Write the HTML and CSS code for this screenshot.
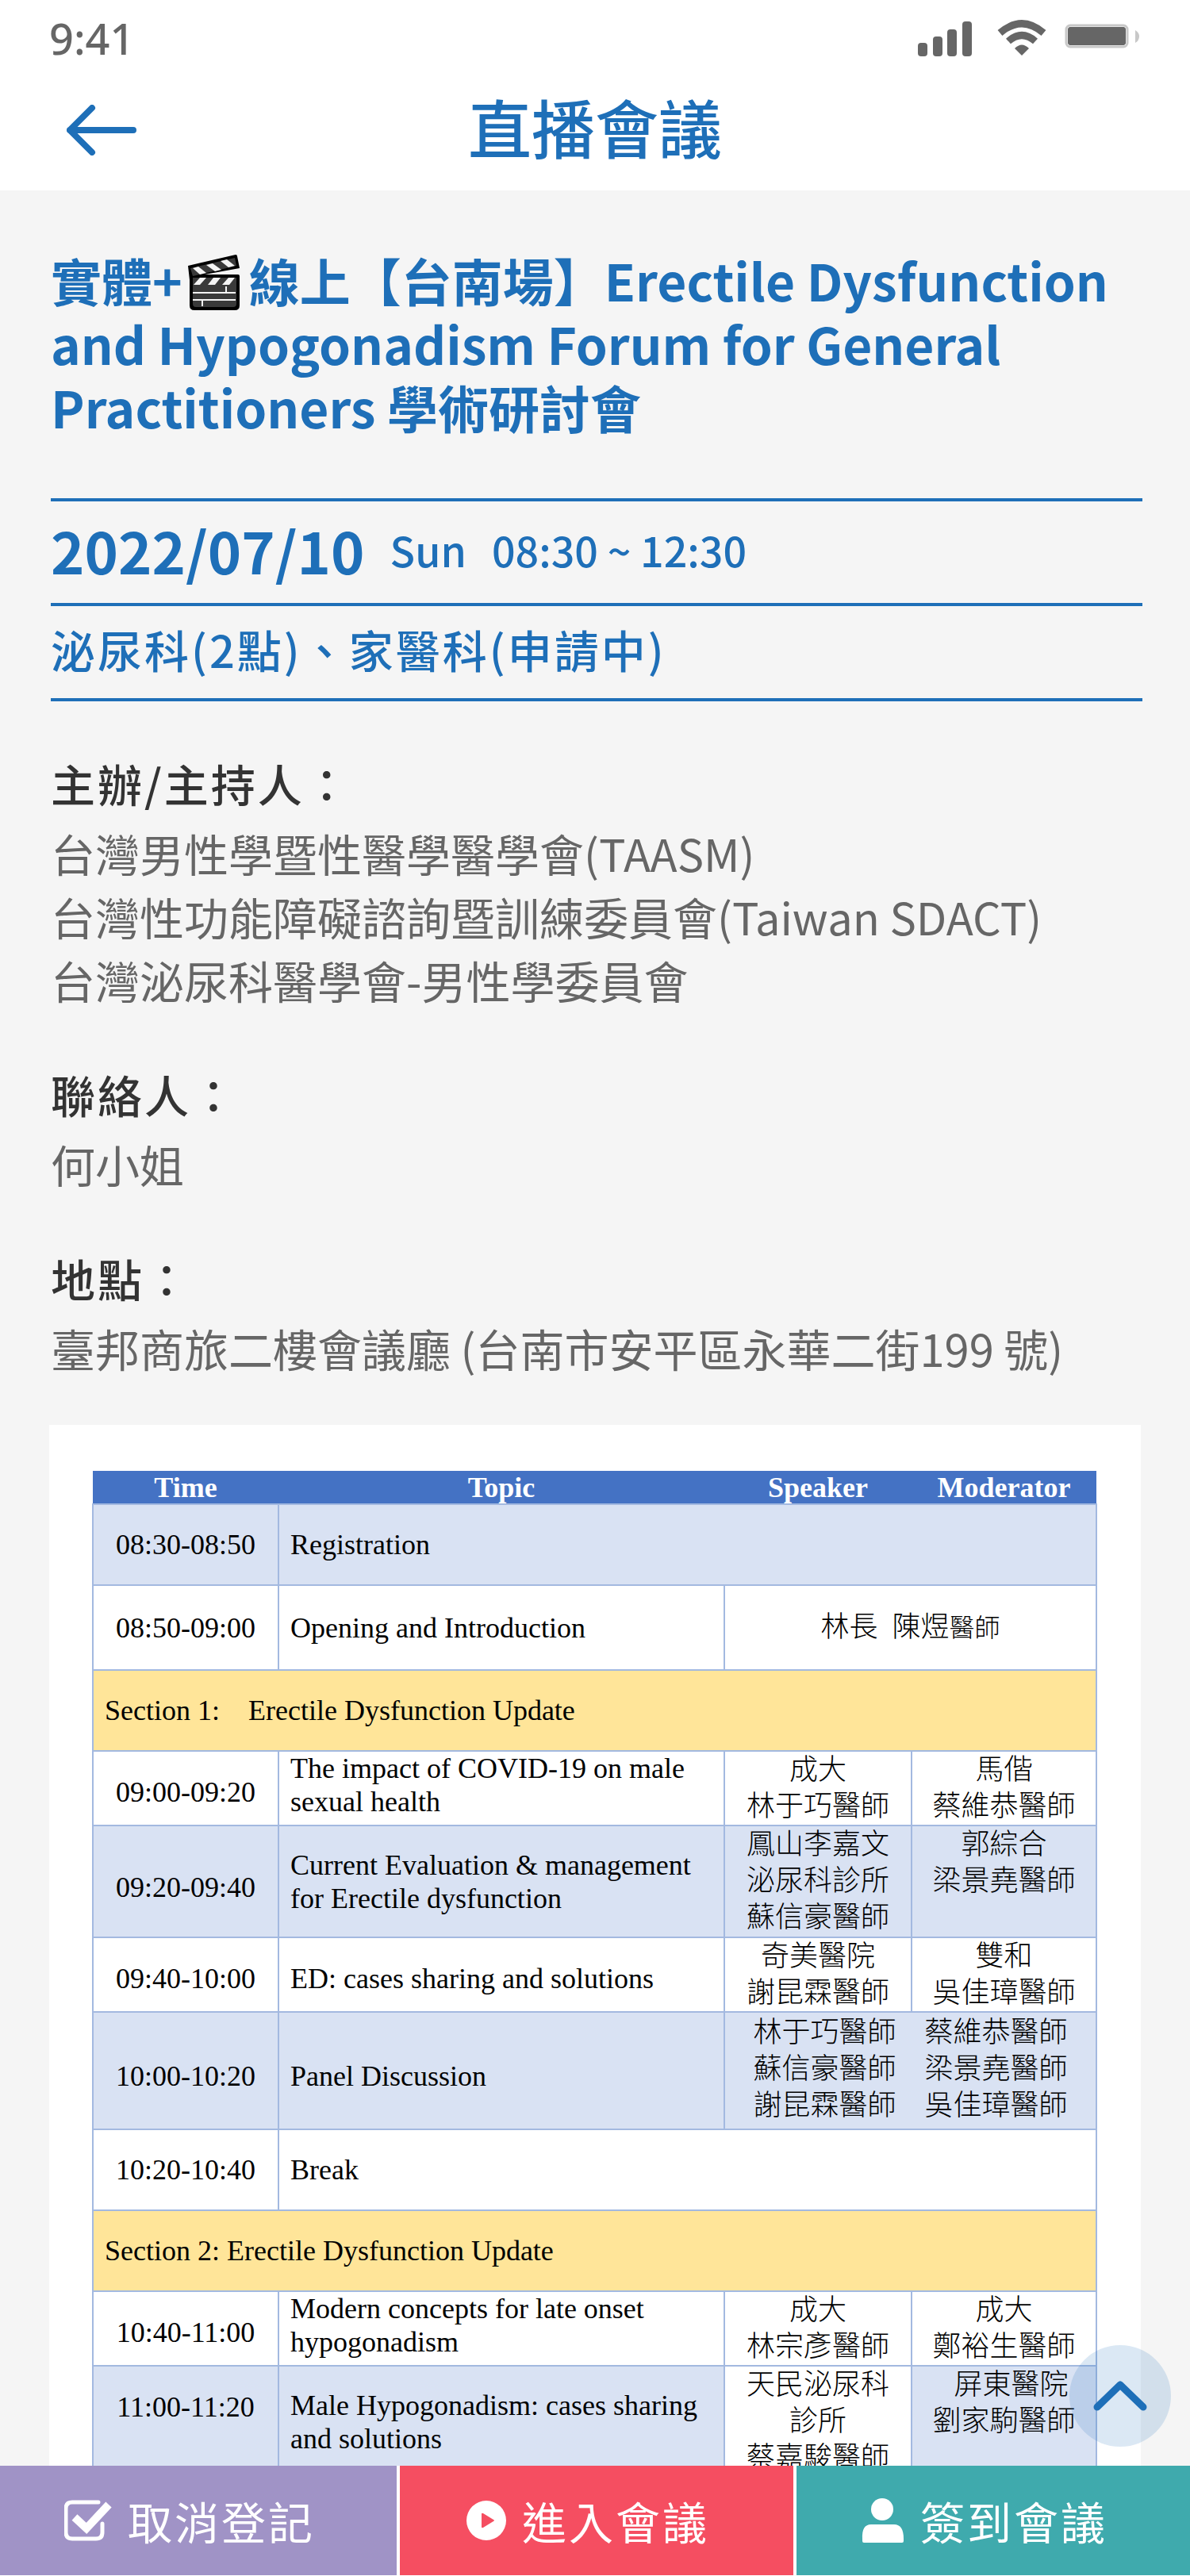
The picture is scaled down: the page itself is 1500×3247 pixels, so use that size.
FILE: index.html
```html
<!DOCTYPE html>
<html lang="zh-Hant-TW">
<head>
<meta charset="utf-8">
<meta name="viewport" content="width=device-width, initial-scale=1">
<title>直播會議</title>
<link rel="stylesheet" href="styles.css">
</head>
<body>
<div class="app">
  <header class="top">
    <div class="status">
      <span class="clock">9:41</span>
      <svg class="status-icons" width="280" height="48" viewBox="0 0 280 48" aria-hidden="true">
        <g fill="#666">
          <rect x="1" y="30" width="12" height="17" rx="4"/>
          <rect x="20" y="22" width="12" height="25" rx="4"/>
          <rect x="38" y="13" width="12" height="34" rx="4"/>
          <rect x="57" y="3" width="12" height="44" rx="4"/>
          <path d="M132 46 L123 37 Q132 28 141 37 Z"/>
          <rect x="190" y="10" width="73" height="23" rx="4"/>
        </g>
        <g fill="none" stroke="#666" stroke-width="9">
          <path d="M104.500 17.500 Q132 -6 159.500 17.500"/>
          <path d="M115 28 Q132 13 149 28"/>
        </g>
        <rect x="188" y="8" width="77" height="27" rx="5" fill="none" stroke="#c8c8c8" stroke-width="3"/>
        <rect x="190" y="10" width="73" height="23" rx="4" fill="#666"/>
        <path d="M275 14 Q280 17 280 22 Q280 27 275 30 Z" fill="#c8c8c8"/>
      </svg>
    </div>
    <div class="navbar">
      <button class="back" type="button" aria-label="返回">
        <svg width="88" height="64" viewBox="0 0 88 64" fill="none" stroke="#1e6fb8" stroke-width="8" stroke-linecap="round" stroke-linejoin="round"><path d="M84 32H4M32 4L4 32L32 60"/></svg>
      </button>
      <h1>直播會議</h1>
    </div>
  </header>

  <main class="content">
    <section class="details">
      <h2 class="title">實體+<svg class="clapper" width="84" height="72" viewBox="0 0 84 72" role="img" aria-label="場記板">
        <path d="M7 15 L67 1 Q69 1 69 3 L72 18 L28 26 H70 Q72 26 72 28 V65 Q72 71 66 71 H15 Q9 71 9 65 V33 Z" fill="#000"/>
        <path d="M10 18 L66 5 L68 15 L13 28 Z M13 30 H68 V63 Q68 67 64 67 H17 Q13 67 13 63 Z" fill="#3a3a3a"/>
        <path d="M13 18 L20 16 L30 24 L22 26 Z M30 14 L38 12 L49 20 L41 22 Z M48 9 L56 7 L66 15 L58 17 Z M14 39 L22 30 H30 L22 39 Z M32 39 L39 30 H48 L41 39 Z M50 39 L58 30 H66 L59 39 Z" fill="#f4f4f4"/>
        <path d="M13 49 H67 M13 58 H67 M55 41 V49 M25 59 V66" fill="none" stroke="#f4f4f4" stroke-width="2"/>
      </svg>線上【台南場】Erectile Dysfunction and Hypogonadism Forum for General Practitioners 學術研討會</h2>
      <div class="when">
        <time class="date" datetime="2022-07-10">2022/07/10</time>
        <span>Sun</span>
        <span>08:30 ~ 12:30</span>
      </div>
      <p class="credits">泌尿科(2點)、家醫科(申請中)</p>
      <dl class="facts">
        <div>
          <dt>主辦/主持人：</dt>
          <dd>台灣男性學暨性醫學醫學會(TAASM)</dd>
          <dd>台灣性功能障礙諮詢暨訓練委員會(Taiwan SDACT)</dd>
          <dd>台灣泌尿科醫學會-男性學委員會</dd>
        </div>
        <div>
          <dt>聯絡人：</dt>
          <dd>何小姐</dd>
        </div>
        <div>
          <dt>地點：</dt>
          <dd>臺邦商旅二樓會議廳 (台南市安平區永華二街199 號)</dd>
        </div>
      </dl>
    </section>

    <section class="agenda">
      <table>
        <colgroup><col class="c-time"><col class="c-topic"><col class="c-speaker"><col class="c-moderator"></colgroup>
        <thead>
          <tr><th>Time</th><th>Topic</th><th>Speaker</th><th>Moderator</th></tr>
        </thead>
        <tbody>
          <tr class="tinted"><td class="time">08:30-08:50</td><td colspan="3">Registration</td></tr>
          <tr class="tall"><td class="time">08:50-09:00</td><td>Opening and Introduction</td><td class="people chair" colspan="2">林長&nbsp; 陳煜<small>醫師</small></td></tr>
          <tr class="section"><td colspan="4">Section 1:&nbsp;&nbsp;&nbsp; Erectile Dysfunction Update</td></tr>
          <tr class="talk two"><td class="time">09:00-09:20</td><td class="wrapped">The impact of COVID-19 on male sexual health</td><td class="people">成大<br>林于巧醫師</td><td class="people">馬偕<br>蔡維恭醫師</td></tr>
          <tr class="talk three tinted"><td class="time">09:20-09:40</td><td>Current Evaluation &amp; management for Erectile dysfunction</td><td class="people">鳳山李嘉文<br>泌尿科診所<br>蘇信豪醫師</td><td class="people">郭綜合<br>梁景堯醫師</td></tr>
          <tr class="talk two"><td class="time">09:40-10:00</td><td class="single">ED: cases sharing and solutions</td><td class="people">奇美醫院<br>謝昆霖醫師</td><td class="people">雙和<br>吳佳璋醫師</td></tr>
          <tr class="talk panel tinted"><td class="time">10:00-10:20</td><td class="single">Panel Discussion</td><td class="people" colspan="2">林于巧醫師　蔡維恭醫師<br>蘇信豪醫師　梁景堯醫師<br>謝昆霖醫師　吳佳璋醫師</td></tr>
          <tr><td class="time">10:20-10:40</td><td colspan="3">Break</td></tr>
          <tr class="section"><td colspan="4">Section 2: Erectile Dysfunction Update</td></tr>
          <tr class="talk two"><td class="time">10:40-11:00</td><td class="wrapped">Modern concepts for late onset hypogonadism</td><td class="people">成大<br>林宗彥醫師</td><td class="people">成大<br>鄭裕生醫師</td></tr>
          <tr class="talk three tinted"><td class="time first-line">11:00-11:20</td><td>Male Hypogonadism: cases sharing and solutions</td><td class="people plain">天民泌尿科<br>診所<br>蔡嘉駿醫師</td><td class="people">&nbsp;&nbsp;屏東醫院<br>劉家駒醫師</td></tr>
        </tbody>
      </table>
    </section>
  </main>

  <footer class="actions">
    <button class="to-top" type="button" aria-label="回到頂端">
      <svg width="68" height="40" viewBox="0 0 68 40" fill="none" stroke="#1e6fb8" stroke-width="9" stroke-linecap="round" stroke-linejoin="round"><path d="M5 34L34 6L63 34"/></svg>
    </button>
    <button class="action cancel" type="button">
      <svg width="60" height="52" viewBox="0 0 60 52" fill="none" stroke="#fff"><path d="M43 3H10Q2 3 2 11V41Q2 49 10 49H40Q48 49 48 41V30" stroke-width="5" stroke-linecap="round"/><path d="M13 22L28 36L56 6" stroke-width="10"/></svg>
      取消登記
    </button>
    <button class="action enter" type="button">
      <svg width="50" height="50" viewBox="0 0 50 50" fill="#fff"><path fill-rule="evenodd" d="M25 0A25 25 0 1 1 25 50A25 25 0 1 1 25 0ZM19 17V33Q19 35 21 34L34 26Q36 25 34 24L21 16Q19 15 19 17Z"/></svg>
      進入會議
    </button>
    <button class="action checkin" type="button">
      <svg width="54" height="58" viewBox="0 0 54 58" fill="#fff"><circle cx="26" cy="15" r="14"/><path d="M12 34H41Q53 34 53 52V55Q53 57 51 57H3Q1 57 1 55V52Q0 34 12 34Z"/></svg>
      簽到會議
    </button>
  </footer>
</div>
</body>
</html>
```
FILE: styles.css
```css
* {
  box-sizing: border-box;
}

body {
  margin: 0;
  background: #f5f5f5;
  color: #666;
  font-family: "Noto Sans CJK TC", sans-serif;
  font-size: 56px;
  line-height: 80px;
}

h1, h2, p, dl, dd {
  margin: 0;
}

button {
  border: 0;
  padding: 0;
  background: none;
  color: inherit;
  font: inherit;
}

svg {
  display: block;
  flex: none;
}

.app {
  display: flex;
  flex-direction: column;
  height: 100vh;
}

/* Header */
.top {
  flex: none;
  background: #fff;
}

.status {
  display: flex;
  align-items: center;
  justify-content: space-between;
  height: 96px;
  padding: 0 64px 0 62px;
}

.clock {
  font-family: "Noto Sans", sans-serif;
  font-size: 54px;
  font-weight: 500;
}

.navbar {
  display: grid;
  grid-template-columns: 1fr auto 1fr;
  align-items: center;
  height: 144px;
  padding: 0 84px 8px;
  color: #1e6fb8;
}

.back {
  justify-self: start;
}

.navbar h1 {
  padding-bottom: 12px;
  font-size: 80px;
  font-weight: 500;
}

/* Scrolling content */
.content {
  flex: 1;
  min-height: 0;
  overflow: hidden auto;
  scrollbar-width: none;
}

.details {
  padding: 72px 60px 0 64px;
}

.title {
  margin-bottom: 76px;
  color: #1e6fb8;
  font-size: 64px;
  font-weight: 700;
}

.clapper {
  display: inline-block;
  vertical-align: -12px;
}

.when,
.credits {
  border-top: 4px solid #1e6fb8;
  color: #1e6fb8;
  font-weight: 500;
}

.when {
  display: flex;
  align-items: center;
  gap: 32px;
  height: 132px;
  padding-bottom: 6px;
  font-size: 52px;
}

.date {
  font-size: 72px;
  font-weight: 700;
}

.credits {
  padding: 14px 0 22px;
  border-bottom: 4px solid #1e6fb8;
  letter-spacing: 3px;
}

.facts {
  display: flex;
  flex-direction: column;
  gap: 64px;
  padding: 63px 0 57px;
}

.facts dt {
  margin-bottom: 8px;
  color: #333;
  font-weight: 500;
  letter-spacing: 3px;
}

/* Agenda */
.agenda {
  margin: 0 62px;
  padding: 58px 55px 240px 54px;
  background: #fff;
}

table {
  width: 100%;
  border-collapse: collapse;
  table-layout: fixed;
  color: #000;
  font-family: "Liberation Serif", "Noto Sans CJK TC", serif;
  font-size: 36px;
  line-height: 42px;
}

.c-time { width: 234px; }
.c-speaker { width: 236px; }
.c-moderator { width: 233px; }

th {
  height: 42px;
  padding: 0;
  background: #4472c4;
  color: #fff;
  line-height: 38px;
}

td {
  height: 102px;
  padding: 0 14px;
  border: 2px solid #a3b9e0;
}

.time,
.people {
  padding: 0;
  text-align: center;
}

.people {
  font-weight: 300;
  line-height: 46px;
  vertical-align: top;
}

.people.chair {
  vertical-align: middle;
}

.people small {
  font-size: 32px;
}

.tinted td {
  background: #d9e2f3;
}

.tinted .plain {
  background: #fff;
}

.section td {
  background: #ffe599;
}

.tall td { height: 107px; }
.two td { height: 94px; }
.three td { height: 141px; }
.panel td { height: 148px; }

.talk .time,
.talk .single {
  padding-top: 10px;
}

.three .time,
.panel .time,
.panel .single {
  padding-top: 14px;
}

.talk .wrapped {
  padding-bottom: 8px;
}

.panel .people {
  padding-top: 2px;
}

.talk .first-line {
  padding-top: 30px;
  vertical-align: top;
}

/* Bottom bar */
.actions {
  position: relative;
  display: grid;
  grid-template-columns: repeat(3, 1fr);
  flex: none;
  height: 139px;
  padding-bottom: 1px;
  background: #fff;
}

.action {
  display: flex;
  align-items: center;
  justify-content: center;
  gap: 20px;
  padding-right: 22px;
  color: #fff;
  letter-spacing: 3px;
}

.action + .action {
  border-left: 4px solid #fff;
}

.cancel { background: #a093c6; }
.enter { background: #f54e61; }
.checkin { background: #3faaad; }

.to-top {
  position: absolute;
  right: 24px;
  bottom: 163px;
  display: flex;
  align-items: center;
  justify-content: center;
  width: 128px;
  height: 128px;
  border-radius: 50%;
  background: rgba(30, 111, 184, 0.16);
}
```
